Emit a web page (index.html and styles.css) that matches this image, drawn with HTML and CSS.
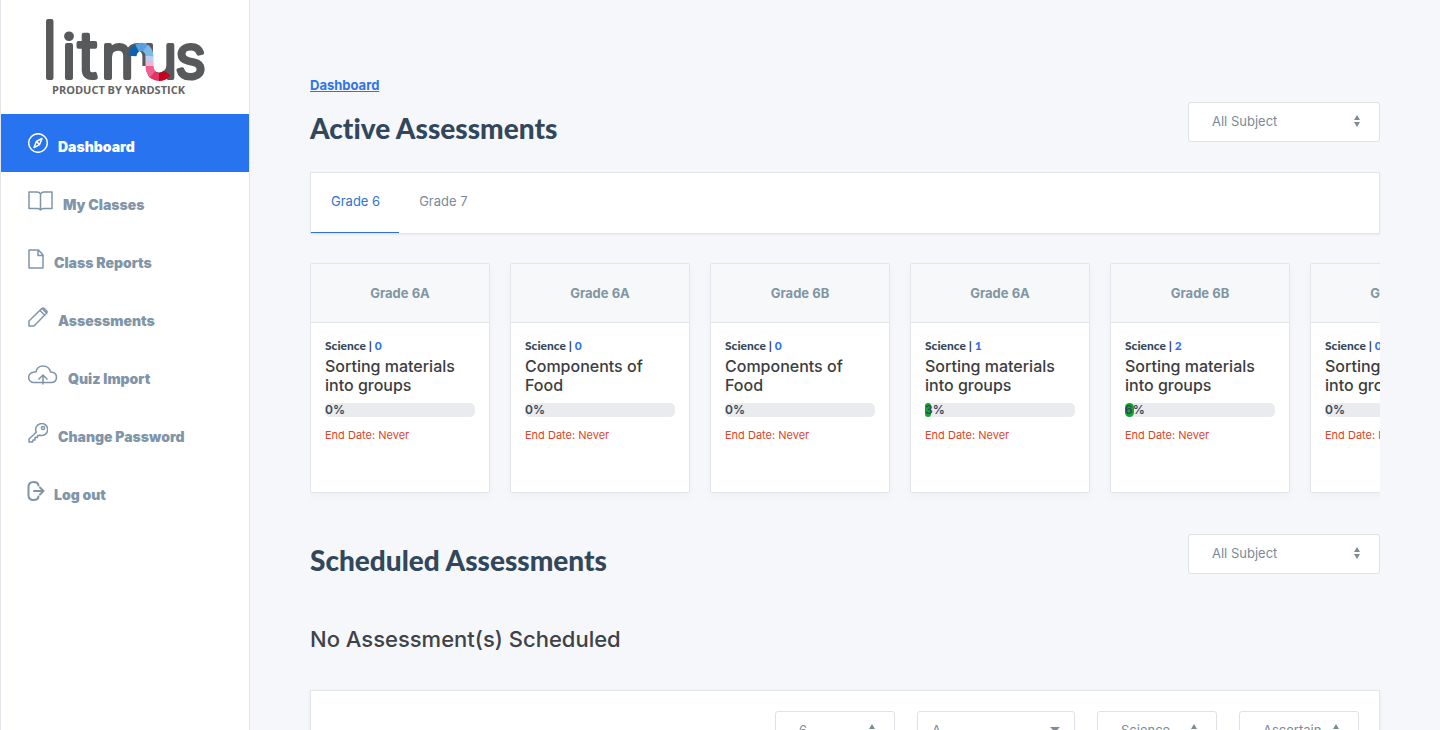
FILE: index.html
```html
<!DOCTYPE html>
<html lang="en">
<head>
    <meta charset="UTF-8">
    <meta name="viewport" content="width=device-width, initial-scale=1.0">
    <title>Litmus Dashboard</title>

    <link rel="stylesheet" href="styles.css">
</head>
<body>

    <div class="layout">
        <aside class="sidebar">
            <a class="logo" href="#">
                <svg width="160" height="80" viewBox="45 16 160 80" role="img" aria-label="litmus, product by Yardstick">
                    <text class="logo-word" y="78"><tspan class="logo-tall" x="41">l</tspan><tspan x="62">i</tspan><tspan class="logo-t" x="78">t</tspan><tspan x="101">m</tspan><tspan x="142">u</tspan><tspan x="175">s</tspan></text>
                    <!-- coloured ribbon joining m and u -->
                    <path fill="#fff" d="M142 66h4q0 11 9 16h-13z"/>
                    <g fill="none" stroke-width="8">
                        <path stroke="#0d62ad" d="M132.500 56q.5-6 5-8.200"/>
                        <path stroke="#5a9fdc" d="M137 48q5-2.500 9 .5"/>
                        <path stroke="#7db7e8" d="M145.500 48q4 3 4 9"/>
                        <path stroke="#b9cdec" d="M149.500 56v5"/>
                        <path stroke="#efb3cb" d="M149.500 61v5"/>
                        <path stroke="#ee5f92" d="M149.500 66q0 6 4 9"/>
                        <path stroke="#e63161" d="M152.500 74.500q3 2.500 7 2.500"/>
                        <path stroke="#c4001f" d="M159 77q5 0 8-4"/>
                    </g>
                    <text class="logo-tag" x="52" y="94">PRODUCT BY YARDSTICK</text>
                </svg>
            </a>

            <nav class="menu">
                <a class="menu-item active" href="#">
                    <svg width="20" height="20" viewBox="0 0 20 20"><circle cx="10" cy="10" r="9.300"/><path d="M14 5.500 11.600 11.600 6 14.500 8.400 8.400zM8.400 8.400l3.200 3.200"/></svg>
                    <span>Dashboard</span>
                </a>
                <a class="menu-item" href="#">
                    <svg width="25" height="20" viewBox="0 0 25 20"><path d="M12.500 3Q11.500 1 9 1H1v16.500h8.500q2 0 3 1.500 1-1.500 3-1.500H24V1h-8q-2.500 0-3.500 2zv16"/></svg>
                    <span>My Classes</span>
                </a>
                <a class="menu-item" href="#">
                    <svg width="16" height="20" viewBox="0 0 16 20"><path d="M1 1h9.500L15 6v13H1zM10 1v5.500h5"/></svg>
                    <span>Class Reports</span>
                </a>
                <a class="menu-item" href="#">
                    <svg width="20" height="20" viewBox="0 0 20 20"><path d="M1 19v-5L14 1.300q1-.8 2 0L18.700 4q.8 1 0 2L6 19zM12 3.500 16.500 8M14 1.500 18.500 6"/></svg>
                    <span>Assessments</span>
                </a>
                <a class="menu-item" href="#">
                    <svg width="30" height="20" viewBox="0 0 30 20"><path d="M6 17.500a5 5 0 0 1-.5-10.200Q7 6.500 8 7q1-6 7-6t7.500 6q1-.2 2 .3A5.200 5.200 0 0 1 24 17.500zM15 19.500v-9M10.500 14.500 15 10l4.500 4.500"/></svg>
                    <span>Quiz Import</span>
                </a>
                <a class="menu-item" href="#">
                    <svg width="20" height="20" viewBox="0 0 20 20"><path d="M8.300 9.200A6 6 0 1 1 12 12.300L9.500 12.500V14.500H7V17H5L4.500 19H1v-3z"/><circle cx="15" cy="5" r="1.600"/></svg>
                    <span>Change Password</span>
                </a>
                <a class="menu-item" href="#">
                    <svg class="bold" width="16" height="20" viewBox="0 0 16 20"><path d="M10.500 4.500Q10 1 5.500 1 .5 1 .5 6v8q0 5 5 5 4.500 0 5-3.500M6 10h9.500M12 6.500l3.500 3.500-3.500 3.500"/></svg>
                    <span>Log out</span>
                </a>
            </nav>
        </aside>

        <main class="content">
            <a class="breadcrumb" href="#">Dashboard</a>

            <section class="section-head">
                <h1>Active Assessments</h1>
                <div class="select-box">
                    <select aria-label="Active subject"><option>All Subject</option></select>
                    <svg width="6" height="12" viewBox="0 0 6 12"><path d="M3 0l3 5H0zM0 7h6l-3 5z"/></svg>
                </div>
            </section>

            <div class="tabs">
                <a class="tab active" href="#">Grade 6</a>
                <a class="tab" href="#">Grade 7</a>
            </div>

            <div class="cards">
                <article class="card">
                    <header>Grade 6A</header>
                    <div class="card-body">
                        <p class="subject">Science | <b>0</b></p>
                        <h3>Sorting materials into groups</h3>
                        <div class="progress"><div class="bar" style="width: 0%"></div><span>0%</span></div>
                        <p class="end-date">End Date: Never</p>
                    </div>
                </article>
                <article class="card">
                    <header>Grade 6A</header>
                    <div class="card-body">
                        <p class="subject">Science | <b>0</b></p>
                        <h3>Components of Food</h3>
                        <div class="progress"><div class="bar" style="width: 0%"></div><span>0%</span></div>
                        <p class="end-date">End Date: Never</p>
                    </div>
                </article>
                <article class="card">
                    <header>Grade 6B</header>
                    <div class="card-body">
                        <p class="subject">Science | <b>0</b></p>
                        <h3>Components of Food</h3>
                        <div class="progress"><div class="bar" style="width: 0%"></div><span>0%</span></div>
                        <p class="end-date">End Date: Never</p>
                    </div>
                </article>
                <article class="card">
                    <header>Grade 6A</header>
                    <div class="card-body">
                        <p class="subject">Science | <b>1</b></p>
                        <h3>Sorting materials into groups</h3>
                        <div class="progress"><div class="bar" style="width: 4%"></div><span>3%</span></div>
                        <p class="end-date">End Date: Never</p>
                    </div>
                </article>
                <article class="card">
                    <header>Grade 6B</header>
                    <div class="card-body">
                        <p class="subject">Science | <b>2</b></p>
                        <h3>Sorting materials into groups</h3>
                        <div class="progress"><div class="bar" style="width: 6%"></div><span>6%</span></div>
                        <p class="end-date">End Date: Never</p>
                    </div>
                </article>
                <article class="card">
                    <header>Grade 6A</header>
                    <div class="card-body">
                        <p class="subject">Science | <b>0</b></p>
                        <h3>Sorting materials into groups</h3>
                        <div class="progress"><div class="bar" style="width: 0%"></div><span>0%</span></div>
                        <p class="end-date">End Date: Never</p>
                    </div>
                </article>
            </div>

            <section class="section-head">
                <h1>Scheduled Assessments</h1>
                <div class="select-box">
                    <select aria-label="Scheduled subject"><option>All Subject</option></select>
                    <svg width="6" height="12" viewBox="0 0 6 12"><path d="M3 0l3 5H0zM0 7h6l-3 5z"/></svg>
                </div>
            </section>
            <h2 class="empty">No Assessment(s) Scheduled</h2>

            <section class="panel">
                <div class="select-box small">
                    <select aria-label="Grade"><option>6</option></select>
                    <svg width="6" height="12" viewBox="0 0 6 12"><path d="M3 0l3 5H0zM0 7h6l-3 5z"/></svg>
                </div>
                <div class="select-box medium">
                    <select aria-label="Section"><option>A</option></select>
                    <svg width="10" height="5" viewBox="0 0 10 5"><path d="M0 0h10L5 5z"/></svg>
                </div>
                <div class="select-box small">
                    <select aria-label="Subject"><option>Science</option></select>
                    <svg width="6" height="12" viewBox="0 0 6 12"><path d="M3 0l3 5H0zM0 7h6l-3 5z"/></svg>
                </div>
                <div class="select-box small">
                    <select aria-label="Report"><option>Ascertain</option></select>
                    <svg width="6" height="12" viewBox="0 0 6 12"><path d="M3 0l3 5H0zM0 7h6l-3 5z"/></svg>
                </div>
            </section>
        </main>
    </div>

</body>
</html>
```
FILE: styles.css
```css
* {
    margin: 0;
    padding: 0;
    box-sizing: border-box;
}

body {
    font-family: Inter, "Liberation Sans", sans-serif;
    font-size: 13px;
    color: #7b8a97;
    background-color: #f5f7fb;
}

a {
    color: inherit;
    text-decoration: none;
}

.layout {
    display: flex;
    height: 100vh;
}

/* Sidebar */
.sidebar {
    flex: 0 0 250px;
    background-color: #fff;
    border: solid #e2e5e9;
    border-width: 0 1px;
}

.logo {
    display: block;
    height: 114px;
    padding: 16px 44px;
}

.logo svg {
    display: block;
    overflow: visible;
}

.logo-word {
    font-family: Inter, sans-serif;
    font-size: 60px;
    font-weight: 300;
    fill: #58595b;
    stroke: #58595b;
    stroke-width: 4;
    stroke-linejoin: round;
}

.logo-tall {
    font-size: 78px;
    font-weight: 200;
}

.logo-t {
    font-size: 64px;
}

.logo-tag {
    font-family: "Open Sans", sans-serif;
    font-size: 11px;
    font-weight: 700;
    fill: #636466;
}

.menu-item {
    display: flex;
    align-items: center;
    gap: 10px;
    height: 58px;
    padding: 0 27px;
    font-size: 14px;
    font-weight: 900;
    color: #8195a8;
}

.menu-item svg {
    fill: none;
    stroke: currentColor;
    stroke-width: 1.5;
    stroke-linejoin: round;
}

.menu-item svg.bold {
    stroke-width: 2;
    stroke-linecap: round;
    overflow: visible;
}

.menu-item span {
    padding-top: 6px;
}

.menu-item.active {
    color: #fff;
    background-color: #2874f0;
}

/* Main column */
.content {
    flex: 1;
    min-width: 0;
    padding: 76px 60px 0;
    overflow-y: auto;
    scrollbar-width: none;
}

.breadcrumb {
    display: block;
    width: max-content;
    line-height: 18px;
    font-weight: 700;
    color: #2f73ee;
    text-decoration: underline;
}

.section-head {
    display: flex;
    justify-content: space-between;
    align-items: flex-start;
    margin-top: 8px;
}

h1 {
    font-family: Lato, sans-serif;
    font-size: 28px;
    line-height: 52px;
    font-weight: 900;
    font-variant-ligatures: none;
    color: #33475b;
}

.select-box {
    position: relative;
    width: 192px;
    height: 40px;
}

.select-box select {
    appearance: none;
    width: 100%;
    height: 100%;
    padding: 0 23px 2px;
    font: inherit;
    color: #7b8a97;
    background-color: #fff;
    border: 1px solid #dfe3e8;
    border-radius: 3px;
}

.select-box svg {
    position: absolute;
    top: 13px;
    right: 20px;
    fill: #7d8c95;
    pointer-events: none;
}

.tabs {
    display: flex;
    height: 62px;
    margin-top: 18px;
    background-color: #fff;
    border: 1px solid #e2e5e9;
    box-shadow: 0 1px 2px rgba(0, 0, 0, 0.06);
}

.tab {
    padding: 0 19px 0 20px;
    line-height: 56px;
}

.tab.active {
    color: #2d72d9;
    border-bottom: 1px solid #2d72d9;
}

/* Assessment cards */
.cards {
    display: flex;
    gap: 20px;
    padding: 29px 0 33px;
    overflow: hidden;
}

.card {
    flex: 0 0 180px;
    height: 230px;
    background-color: #fff;
    border: 1px solid #e2e5e9;
    border-radius: 2px;
    box-shadow: 0 4px 8px rgba(0, 0, 0, 0.03);
}

.card header {
    height: 59px;
    line-height: 58px;
    text-align: center;
    font-weight: 700;
    color: #8195a3;
    background-color: #f7f8fa;
    border-bottom: 1px solid #e2e5e9;
}

.card-body {
    padding: 14px;
}

.subject {
    margin-bottom: 2px;
    font-family: Lato, sans-serif;
    font-size: 12px;
    line-height: 18px;
    font-weight: 900;
    color: #33475b;
}

.subject b {
    color: #2f73ee;
}

.card h3 {
    font-size: 16px;
    line-height: 19px;
    font-weight: 500;
    color: #3b3d40;
}

.progress {
    position: relative;
    height: 14px;
    margin-top: 8px;
    background-color: #e9ebee;
    border-radius: 5px;
}

.progress .bar {
    height: 100%;
    background-color: #12a72c;
    border-radius: 5px;
}

.progress span {
    position: absolute;
    top: 0;
    left: 0;
    font-size: 12px;
    line-height: 14px;
    font-weight: 600;
    color: #33475b;
}

.end-date {
    margin-top: 10px;
    font-size: 11px;
    line-height: 16px;
    color: #df4326;
}

.empty {
    margin-top: 38px;
    font-size: 22px;
    line-height: 30px;
    font-weight: 500;
    color: #3f4246;
}

/* Report panel */
.panel {
    display: flex;
    justify-content: flex-end;
    gap: 22px;
    height: 300px;
    margin-top: 36px;
    padding: 20px;
    background-color: #fff;
    border: 1px solid #e2e5e9;
    box-shadow: 0 1px 4px rgba(0, 0, 0, 0.06);
}

.select-box.small {
    width: 120px;
}

.select-box.medium {
    width: 158px;
}

.select-box.medium select {
    padding: 0 14px 2px;
}

.select-box.medium svg {
    top: 16px;
    right: 15px;
}
```
